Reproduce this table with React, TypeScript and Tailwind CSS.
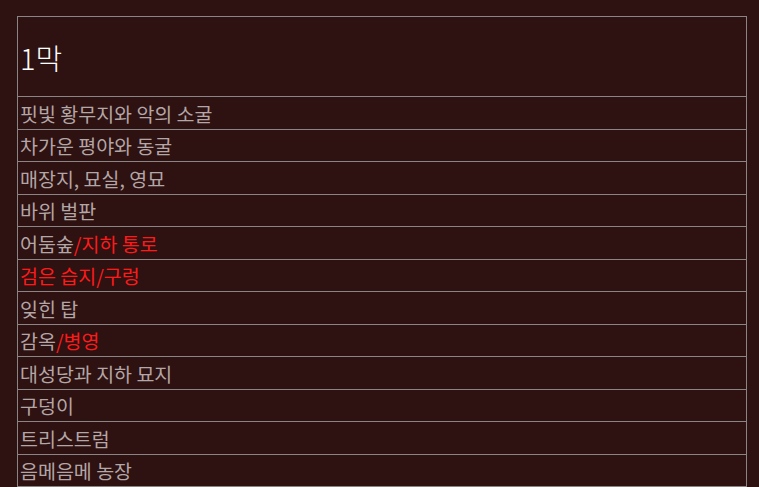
const rows: { parts: { t: string; red?: boolean }[] }[] = [
  { parts: [{ t: "핏빛 황무지와 악의 소굴" }] },
  { parts: [{ t: "차가운 평야와 동굴" }] },
  { parts: [{ t: "매장지, 묘실, 영묘" }] },
  { parts: [{ t: "바위 벌판" }] },
  { parts: [{ t: "어둠숲" }, { t: "/지하 통로", red: true }] },
  { parts: [{ t: "검은 습지/구렁", red: true }] },
  { parts: [{ t: "잊힌 탑" }] },
  { parts: [{ t: "감옥" }, { t: "/병영", red: true }] },
  { parts: [{ t: "대성당과 지하 묘지" }] },
  { parts: [{ t: "구덩이" }] },
  { parts: [{ t: "트리스트럼" }] },
  { parts: [{ t: "음메음메 농장" }] },
];

export default function App() {
  return (
    <div
      className="h-[487px] w-[759px] overflow-hidden bg-[#2e1111] pt-[16px] pl-[17px]"
      style={{ fontFamily: '"Noto Sans CJK KR", "Noto Sans", sans-serif' }}
    >
      <div className="w-[730px] border-x border-t border-[#8a8484]">
        {/* act header */}
        <div className="flex h-[80px] items-center border-b border-[#8a8484] pl-[2px] pt-[2px] text-[29px] font-light text-white">
          1막
        </div>
        {rows.map((row, i) => (
          <div
            key={i}
            className="flex h-[32.5px] items-center border-b border-[#8a8484] pl-[2px] pt-[1px] text-[19.5px] text-[#b3a6a6]"
          >
            {row.parts.map((p, j) => (
              <span key={j} className={p.red ? "text-[#ff1a1a]" : ""}>
                {p.t}
              </span>
            ))}
          </div>
        ))}
      </div>
    </div>
  );
}
